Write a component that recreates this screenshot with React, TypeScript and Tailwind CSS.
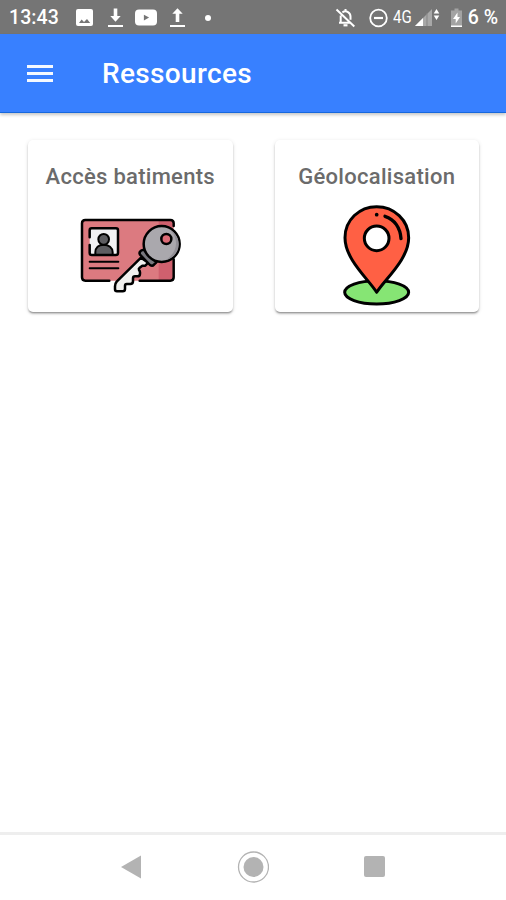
import React from 'react';

function StatusBar() {
  return (
    <div className="flex h-[34px] items-center bg-[#757575] pl-[9px] pt-px text-[19.5px] font-medium text-white">
      <span className="w-[67px] pt-px tracking-[.1px]">13:43</span>

      <svg className="mr-[15px] h-[18px] w-[17px]" viewBox="0 0 17 18" fill="none">
        <rect width="17" height="17" y="0" rx="2" fill="#fff" />
        <path d="M3 14l2.6-3.4 2.4 2.4 3-3 3.2 4z" fill="#757575" />
      </svg>
      <svg className="mr-[12px] h-[20px] w-[15px]" viewBox="0 0 15 20" fill="#fff">
        <path d="M5.7 .5h3.6V8h3.4l-5.2 5.7L2.3 8h3.4zM0 17.1h15V19H0z" />
      </svg>
      <svg className="mr-[13px] h-[18px] w-[22px]" viewBox="0 0 22 18">
        <rect y=".5" width="22" height="16" rx="4" fill="#fff" />
        <path d="M8.9 5.7l5.2 2.9-5.2 2.9z" fill="#757575" />
      </svg>
      <svg className="mr-[20px] h-[20px] w-[15px]" viewBox="0 0 15 20" fill="#fff">
        <path d="M7.5 .3l5.2 5.5H9.3V14H5.7V5.8H2.3zM0 17.1h15V19H0z" />
      </svg>
      <span className="size-[6px] rounded-full bg-white" />

      <div className="ml-auto flex items-center pr-[8px]">
        <svg className="mr-[13px] h-[20px] w-[20px]" viewBox="0 0 20 20" fill="none" stroke="#fff" strokeWidth="2">
          <path d="M4 14.8h11.6M5.7 14.5V7.5M7.4 4.3C11.5 1.7 15.5 5 15.5 8.6v3.2M10.5 1v2M1.5 1.5l17.8 17" />
          <path d="M8.5 17.3h4" strokeWidth="2.2" />
        </svg>
        <svg className="mr-[5px] h-[20px] w-[20px]" viewBox="0 0 20 20" fill="none" stroke="#fff" strokeWidth="1.8">
          <circle cx="10.5" cy="10" r="8.3" />
          <path d="M6 10h9" strokeWidth="2.2" />
        </svg>
        <span className="w-[22px] origin-left scale-x-[.86] text-[17.5px] font-normal">4G</span>
        <svg className="mr-[11px] h-[20px] w-[25px]" viewBox="0 0 25 20">
          <path d="M0 18L17 1v17z" fill="#a8a8a8" />
          <path d="M0 18l8-8V18z" fill="#fff" />
          <path d="M12 5v13" stroke="#858585" />
          <path d="M21.5 1l2.8 4.6h-5.6zM21.5 12l2.8-4.6h-5.6z" fill="#fff" />
        </svg>
        <svg className="mr-[6px] h-[20px] w-[11px]" viewBox="0 0 11 20">
          <path d="M3.5 .5h4v2H11V19H0V2.5h3.5z" fill="#a3a3a3" />
          <path d="M0 17.5h11V19H0z" fill="#fff" />
          <path d="M6.5 4.5L2 11h2.7v4.5L9 9H6.5z" fill="#fff" />
        </svg>
        <span className="whitespace-nowrap pt-px">6 %</span>
      </div>
    </div>
  );
}

function AccessIcon() {
  return (
    <svg className="h-[100px] w-[120px]" viewBox="0 0 360 300" fill="none" stroke="#000" strokeWidth="7.5" strokeLinecap="round" strokeLinejoin="round">
      <rect x="36" y="45" width="275" height="182" rx="9" fill="#dc7a80" stroke="none" />
      <path d="M266 48h35q6 0 6 6v172h-41z" fill="#d0606e" stroke="none" />
      <path d="M118 227H46q-10 0-10-10V55q0-10 10-10h255q10 0 10 10v8M311 163v54q0 10-10 10h-92" />

      <path d="M59 70h85v80H59z" fill="#f1f1f3" stroke="none" />
      <path d="M59 97V76q0-6 6-6h73q6 0 6 6v68q0 6-6 6H65q-6 0-6-6v-24" />
      <path d="M76 149v-7c0-14 10-23 25-23s27 9 27 23v7z" fill="#5d5d61" strokeWidth="6" />
      <circle cx="101" cy="103" r="16" fill="#5d5d61" strokeWidth="6" />
      <path d="M59 170h86M59 190h86" strokeWidth="6" />

      <path d="M213 158L140 230q-5 6-5 14v9q0 6 6 6h17q7 0 7-7v-10q0-5 5-5h11q8 0 8-8v-9q0-6 6-6h7q8 0 8-8v-4q0-4-3-7-2-4 2-7l8-6h9l9-9z" fill="#f1f0ee" />
      <path d="M213 137q-7 5-3 12l30 31q7 5 12-1l7-7-38-38z" fill="#77777d" />
      <circle cx="275" cy="117" r="54" fill="#aaa8ad" />
      <path d="M302 76c28 31 17 68-13 88 39-8 54-61 13-88z" fill="#929097" stroke="none" />
      <circle cx="289" cy="102" r="15" fill="#dc6b76" />
    </svg>
  );
}

function LocationIcon() {
  return (
    <svg className="h-[110px] w-[95px]" viewBox="0 15 285 330" fill="none" stroke="#000" strokeWidth="9" strokeLinecap="round" strokeLinejoin="round">
      <ellipse cx="143" cy="292" rx="96" ry="35" fill="#86e574" />
      <path d="M143 292C120 254 48 194 48 128C48 75 91 35 143 35s96 40 96 93c0 66-73 126-96 164z" fill="#ff6044" />
      <circle cx="143" cy="130" r="37" fill="#fff" />
      <path d="M143 59h.1" strokeWidth="11" />
      <path d="M168 64c29 9 46 35 48 67" strokeWidth="10" />
    </svg>
  );
}

function ResourceCard({ title, children }: { title: string; children: React.ReactNode }) {
  return (
    <div className="flex h-[172px] flex-col items-center rounded-[5px] bg-white pt-[23px] shadow-[0_2px_2px_rgba(0,0,0,0.2),0_2px_1px_-1px_rgba(0,0,0,0.18),0_1px_4px_rgba(0,0,0,0.12)]">
      <h2 className="h-[27px] whitespace-nowrap text-[22px] font-medium leading-[27px] tracking-[.28px] text-[#6b6b6b]">{title}</h2>
      {children}
    </div>
  );
}

export default function App() {
  return (
    <div className="flex h-[900px] w-[506px] flex-col bg-white font-['Roboto',sans-serif]">
      <StatusBar />

      <header className="flex h-[79px] shrink-0 items-center border-b border-[#1768dd] bg-[#3880ff] pl-[27px] pt-px text-white shadow-[0_2px_3px_rgba(0,0,0,0.22)]">
        <button className="mr-[49px] flex w-[26px] flex-col gap-[4px]" aria-label="Menu">
          <span className="h-[3px] w-full bg-white/95" />
          <span className="h-[3px] w-full bg-white/95" />
          <span className="h-[3px] w-full bg-white/95" />
        </button>
        <h1 className="pt-px text-[28px] font-medium tracking-[.35px]">Ressources</h1>
      </header>

      <main className="grid flex-1 grid-cols-2 content-start gap-[42px] pl-[28px] pr-[27px] pt-[27px]">
        <ResourceCard title="Accès batiments">
          <div className="mt-[15px]">
            <AccessIcon />
          </div>
        </ResourceCard>
        <ResourceCard title="Géolocalisation">
          <div className="mt-[10px]">
            <LocationIcon />
          </div>
        </ResourceCard>
      </main>

      <nav className="flex h-[68px] items-center justify-center gap-[96px] border-t-[3px] border-[#eeeeee] pb-[2px]">
        <svg className="h-[24px] w-[20px]" viewBox="0 0 20 24" fill="#b3b3b3">
          <path d="M0 12L20 .5v23z" />
        </svg>
        <svg className="h-[32px] w-[32px]" viewBox="0 0 32 32">
          <circle cx="16.5" cy="16" r="15" fill="none" stroke="#b3b3b3" strokeWidth="1.3" />
          <circle cx="16.5" cy="16" r="10" fill="#b3b3b3" />
        </svg>
        <span className="-ml-px size-[21px] rounded-[2px] bg-[#b3b3b3]" />
      </nav>
    </div>
  );
}
